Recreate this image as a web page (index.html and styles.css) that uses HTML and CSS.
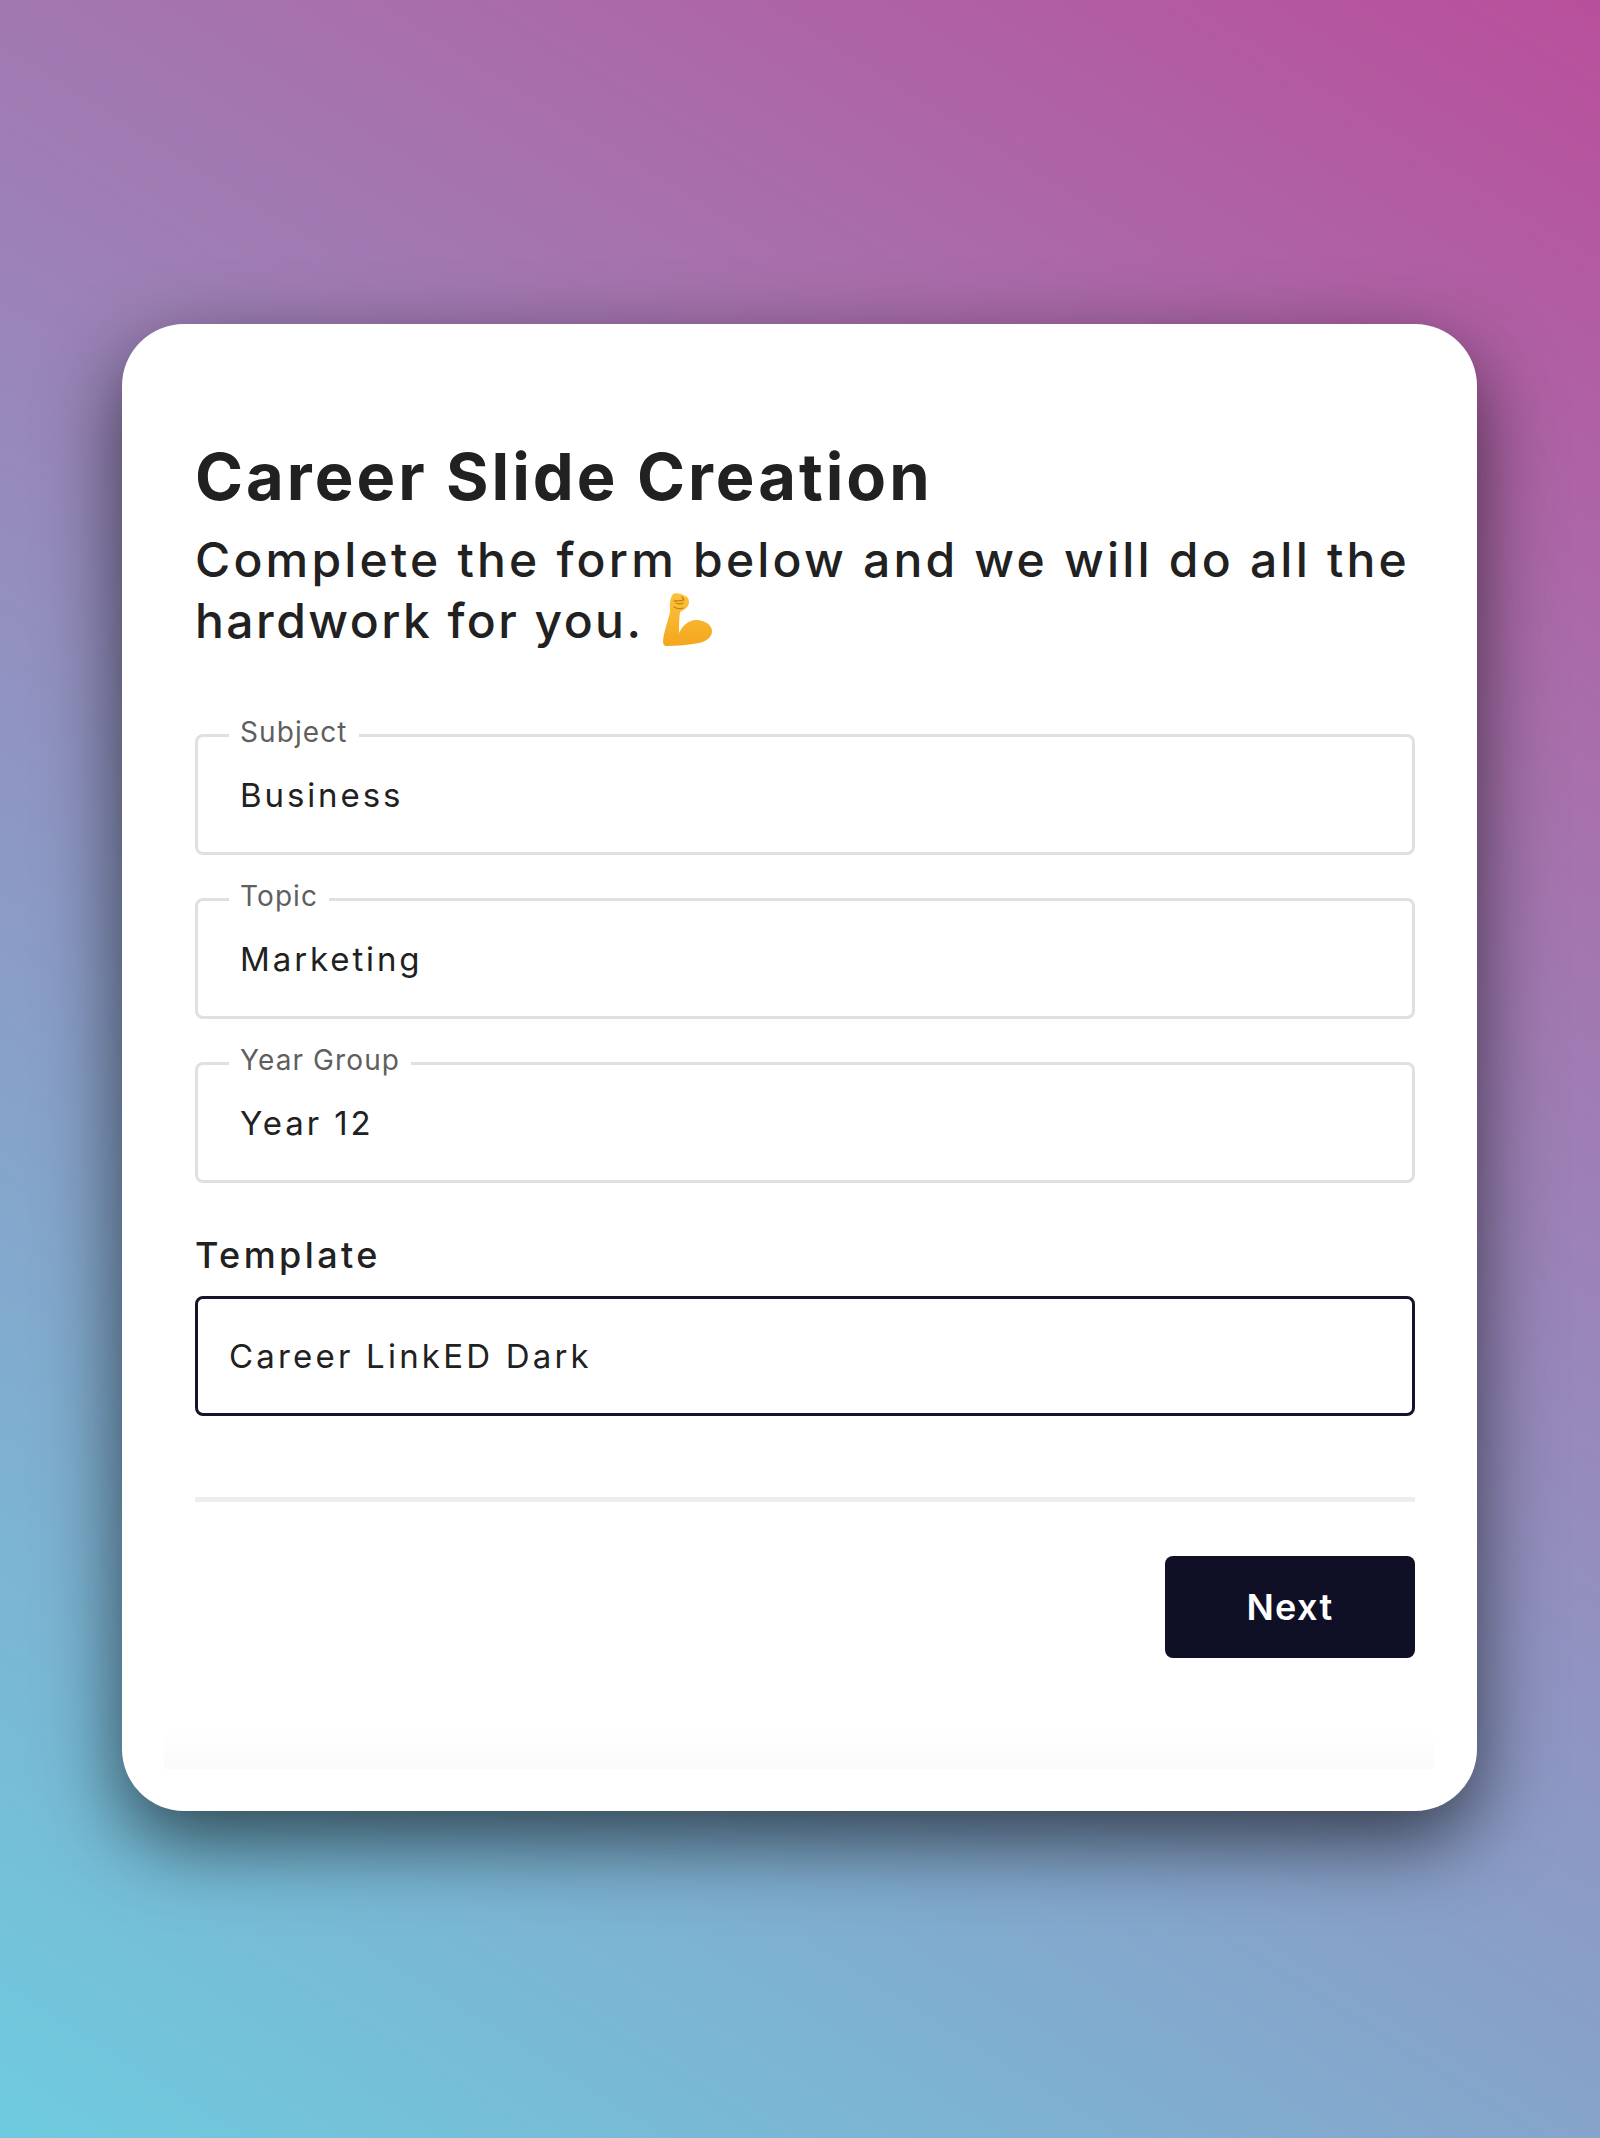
FILE: index.html
```html
<!DOCTYPE html>
<html lang="en">
<head>
  <meta charset="UTF-8">
  <meta name="viewport" content="width=device-width, initial-scale=1.0">
  <title>Career Slide Creation</title>
  <link rel="stylesheet" href="styles.css">
</head>
<body>
  <div class="card">
    <h1>Career Slide Creation</h1>
    <p class="intro">Complete the form below and we will do all the <span class="intro-tail">hardwork for you.</span>
      <svg class="emoji" viewBox="0 0 50 54" aria-hidden="true">
        <defs>
          <linearGradient id="skin" x1="0" y1="0" x2="0" y2="1">
            <stop offset="0" stop-color="#fcc23a"/>
            <stop offset="1" stop-color="#f3a71f"/>
          </linearGradient>
        </defs>
        <path fill="url(#skin)" d="M10 1C14-1 22 2 25 5 27 9 26 13 22 16L17 19C16 26 16 33 16 40 20 32 26 27 33 27 42 27 49 32 49 38 49 44 44 48 36 50 26 52 14 53 4 53 1 53 0 51 0 48 1 38 5 28 7 19 7 14 6 6 10 1Z"/>
        <path fill="none" stroke="#c4800f" stroke-width="1.3" stroke-linecap="round" d="M11 8c3-1 6 1 9-1M13 10c2 1 4 2 7 0M19 4l2 3M11 14c3 2 6 2 9 1"/>
      </svg>
    </p>

    <fieldset class="field">
      <legend>Subject</legend>
      <span>Business</span>
    </fieldset>
    <fieldset class="field">
      <legend>Topic</legend>
      <span>Marketing</span>
    </fieldset>
    <fieldset class="field">
      <legend>Year Group</legend>
      <span>Year 12</span>
    </fieldset>

    <div class="template-label">Template</div>
    <div class="template-box">Career LinkED Dark</div>

    <hr class="divider">

    <div class="actions">
      <button class="next">Next</button>
    </div>

    <div class="footer-fade"></div>
  </div>
</body>
</html>
```

FILE: styles.css
```css
html, body {
  margin: 0;
  height: 100%;
}

body {
  width: 1600px;
  height: 2138px;
  box-sizing: border-box;
  padding: 324px 123px 0 122px;
  font-family: Inter, "Liberation Sans", sans-serif;
  color: #212121;
  background: linear-gradient(212deg, #b94f9c 0%, #a771ad 26%, #8d98c4 58%, #6ecbdf 100%);
}

.card {
  width: 1355px;
  height: 1487px;
  box-sizing: border-box;
  padding: 115px 62px 0 73px;
  background: #fff;
  border-radius: 62px;
  box-shadow: 0 30px 80px rgba(0, 0, 0, 0.62);
}

h1 {
  margin: 0;
  font-size: 65px;
  line-height: 76px;
  font-weight: 700;
  letter-spacing: 3px;
}

.intro {
  margin: 14px 0 0;
  font-size: 48px;
  line-height: 61px;
  font-weight: 500;
  letter-spacing: 3.2px;
}

.intro-tail {
  letter-spacing: 2.45px;
}

.emoji {
  width: 50px;
  height: 54px;
  vertical-align: -9px;
  margin-left: 4px;
}

.field {
  margin: 0 0 25px;
  padding: 0 0 0 42px;
  height: 139px;
  box-sizing: border-box;
  border: 3px solid #e0e0e0;
  border-radius: 8px;
}

.intro + .field {
  margin-top: 65px;
}

.field legend {
  padding: 0 11px 6px;
  margin-left: -11px;
  font-size: 28px;
  line-height: 32px;
  color: #5f5f5f;
  letter-spacing: 1.1px;
}

.field span {
  font-size: 33px;
  line-height: 40px;
  display: block;
  margin-top: 21px;
  letter-spacing: 2.9px;
}

.template-label {
  margin-top: 51px;
  font-size: 36px;
  line-height: 42px;
  font-weight: 500;
  letter-spacing: 3.4px;
}

.template-box {
  margin-top: 20px;
  height: 120px;
  box-sizing: border-box;
  border: 3px solid #14142b;
  border-radius: 8px;
  padding-left: 31px;
  font-size: 33px;
  line-height: 114px;
  letter-spacing: 3.2px;
}

.divider {
  margin: 81px 0 0;
  border: 0;
  height: 5px;
  background: #eeeeee;
}

.actions {
  display: flex;
  justify-content: flex-end;
  margin-top: 54px;
}

.next {
  width: 250px;
  height: 102px;
  border: 0;
  border-radius: 8px;
  background: #0f0f26;
  color: #fff;
  font-family: inherit;
  font-size: 36px;
  font-weight: 600;
  letter-spacing: 1.4px;
}

.footer-fade {
  height: 40px;
  margin: 71px -19px 0 -31px;
  background: linear-gradient(#fff, #fafafa);
}
```
